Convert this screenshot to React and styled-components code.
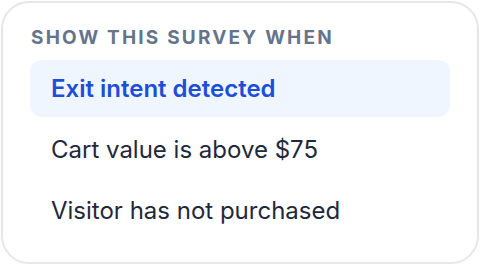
import React from "react";
import styled, { createGlobalStyle } from "styled-components";

const GlobalStyle = createGlobalStyle`
  html, body {
    margin: 0;
    padding: 0;
    background: #ffffff;
  }
  body {
    font-family: Inter, "Noto Sans", sans-serif;
  }
`;

const Card = styled.div`
  box-sizing: border-box;
  width: 478px;
  height: 263px;
  margin: 1px;
  border: 2px solid #e5e7eb;
  border-radius: 28px;
  background: #ffffff;
  padding: 23px 27px 0 27px;
  display: flex;
  flex-direction: column;
`;

const Heading = styled.div`
  font-size: 19px;
  line-height: 24px;
  font-weight: 700;
  letter-spacing: 2.2px;
  color: #64748b;
  text-transform: uppercase;
  padding-left: 1px;
  margin-bottom: 10px;
  white-space: nowrap;
`;

const List = styled.div`
  display: flex;
  flex-direction: column;
  gap: 4px;
`;

const Option = styled.div`
  height: 57px;
  display: flex;
  align-items: center;
  padding: 0 21px;
  border-radius: 12px;
  font-size: 24px;
  font-weight: ${(p) => (p.$active ? 600 : 400)};
  color: ${(p) => (p.$active ? "#1d4ed8" : "#1e293b")};
  background: ${(p) => (p.$active ? "#eff6ff" : "transparent")};
  white-space: nowrap;
`;

const options = [
  "Exit intent detected",
  "Cart value is above $75",
  "Visitor has not purchased",
];

export default function App() {
  return (
    <>
      <GlobalStyle />
      <Card>
        <Heading>Show this survey when</Heading>
        <List>
          {options.map((o, i) => (
            <Option key={o} $active={i === 0}>
              {o}
            </Option>
          ))}
        </List>
      </Card>
    </>
  );
}
